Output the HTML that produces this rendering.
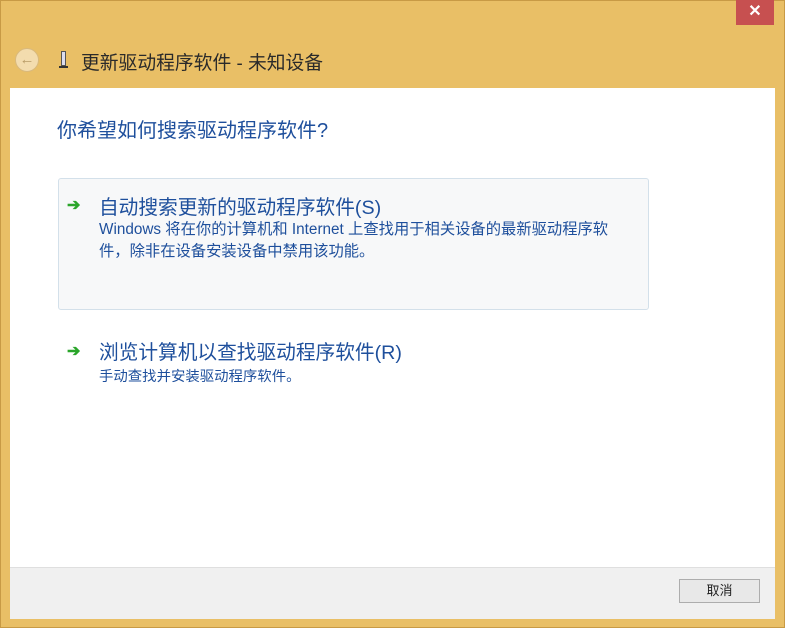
<!DOCTYPE html>
<html><head><meta charset="utf-8"><style>
body{margin:0;width:785px;height:628px;background:#e9bf66;position:relative;overflow:hidden;font-family:"Liberation Sans","Microsoft YaHei","Noto Sans CJK SC",sans-serif;}
.abs{position:absolute;white-space:nowrap;}
</style></head><body>
<div class="abs" style="left:0;top:0;width:783px;height:626px;border:1px solid #c89a45;"></div>
<div class="abs" style="left:736px;top:0;width:38px;height:25px;background:#c75050;color:#fff;font-size:16px;font-weight:bold;text-align:center;line-height:24px;">✕</div>
<div class="abs" style="left:15px;top:48px;width:24px;height:24px;border-radius:50%;background:#f3dcae;border:1px solid #d9b97c;box-sizing:border-box;color:#b99c67;font-size:15px;text-align:center;line-height:21px;">←</div>
<div class="abs" style="left:61px;top:51px;width:5px;height:15px;border:1px solid #555;background:#dde;box-sizing:border-box;"></div>
<div class="abs" style="left:59px;top:66px;width:9px;height:2px;background:#333;"></div>
<div class="abs" style="left:81px;top:48px;font-size:18.8px;color:#2a2a2a;">更新驱动程序软件 - 未知设备</div>
<div class="abs" style="left:10px;top:88px;width:765px;height:479px;background:#fff;"></div>
<div class="abs" style="left:10px;top:567px;width:765px;height:51px;background:#f0f0f0;border-top:1px solid #dfdfdf;"></div>
<div class="abs" style="left:57px;top:114px;font-size:20px;color:#1e4f9c;">你希望如何搜索驱动程序软件?</div>
<div class="abs" style="left:58px;top:178px;width:589px;height:130px;background:#f7f8f9;border:1px solid #d3e0ea;border-radius:3px;"></div>
<div class="abs" style="left:67px;top:195px;font-size:16px;color:#2aa52a;font-weight:bold;">➔</div>
<div class="abs" style="left:99px;top:191px;font-size:19.7px;color:#1e4f9c;">自动搜索更新的驱动程序软件(S)</div>
<div class="abs" style="left:99px;top:219px;font-size:15.3px;line-height:22px;color:#1e4f9c;">Windows 将在你的计算机和 Internet 上查找用于相关设备的最新驱动程序软<br>件，除非在设备安装设备中禁用该功能。</div>
<div class="abs" style="left:67px;top:341px;font-size:16px;color:#2aa52a;font-weight:bold;">➔</div>
<div class="abs" style="left:99px;top:336px;font-size:19.7px;color:#1e4f9c;">浏览计算机以查找驱动程序软件(R)</div>
<div class="abs" style="left:99px;top:365px;font-size:14.4px;color:#1e4f9c;">手动查找并安装驱动程序软件。</div>
<div class="abs" style="left:679px;top:579px;width:81px;height:24px;background:#e8e8e8;border:1px solid #adadad;box-sizing:border-box;font-size:13px;text-align:center;line-height:22px;color:#222;">取消</div>
</body></html>
